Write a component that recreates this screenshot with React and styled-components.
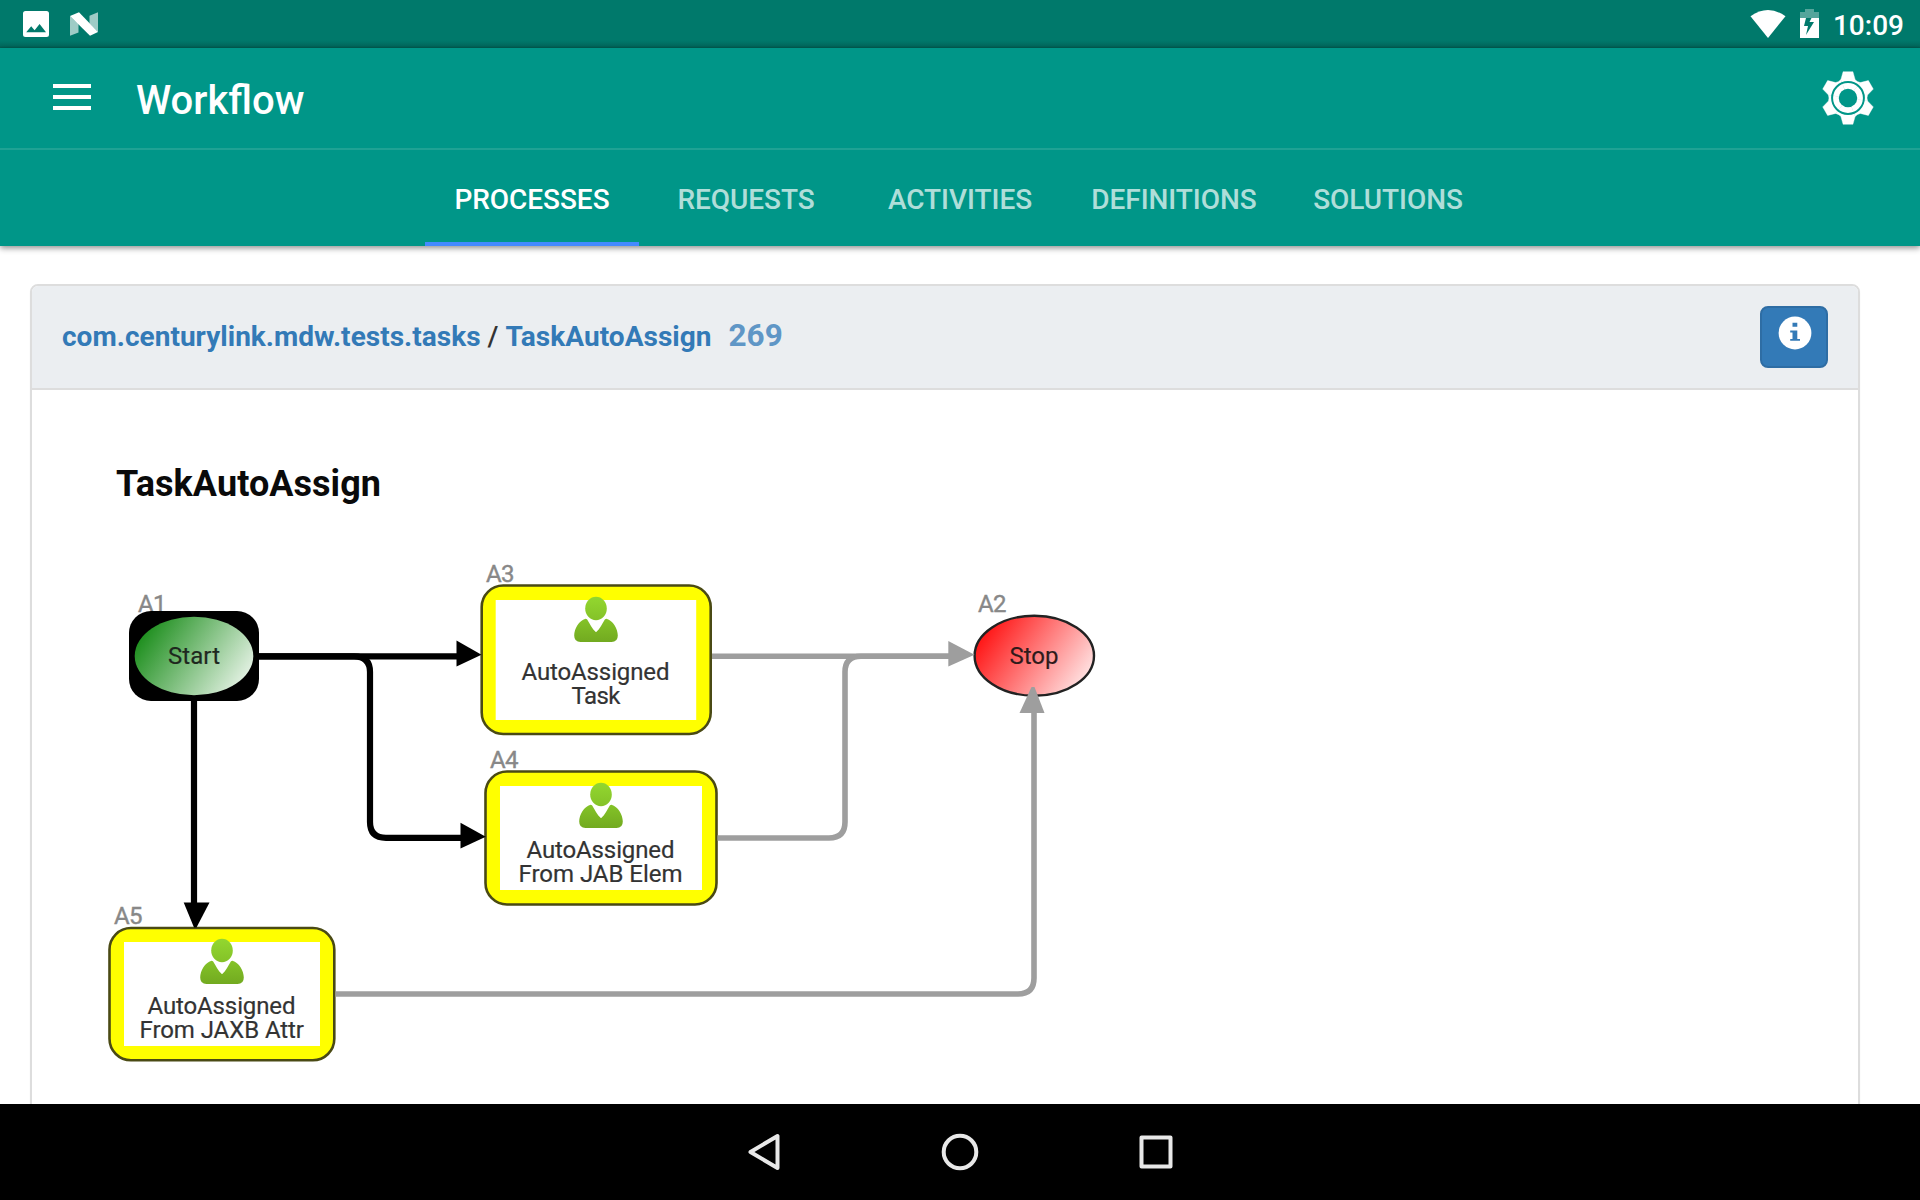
import React from "react";
import styled, { createGlobalStyle } from "styled-components";

const GlobalStyle = createGlobalStyle`
  *, *::before, *::after { box-sizing: border-box; }
  html, body { margin: 0; padding: 0; background: #fff; }
  body { font-family: Roboto, "Noto Sans", sans-serif; overflow: hidden; }
  svg { display: block; }
`;

const Screen = styled.div`
  display: flex;
  flex-direction: column;
  width: 1920px;
  height: 1200px;
  background: #fff;
`;

const StatusBar = styled.div`
  display: flex;
  justify-content: space-between;
  flex: none;
  height: 48px;
  padding: 0 16px 0 20px;
  background: linear-gradient(to bottom, #00796b 0, #00796b 40px, #006a5e 46px, #005b50 48px);
`;

const StatusGroup = styled.div`
  display: flex;
  align-items: flex-start;
`;

const Clock = styled.span`
  margin-left: 12px;
  padding-top: 10px;
  font-size: 28px;
  line-height: 32px;
  font-weight: 500;
  color: #fff;
`;

const Header = styled.header`
  flex: none;
  position: relative;
  z-index: 1;
  height: 198px;
  background: #009688;
  box-shadow: 0 2px 6px rgba(0, 0, 0, 0.45);
`;

const Toolbar = styled.div`
  display: flex;
  align-items: center;
  height: 102px;
  padding: 0 44px 0 53px;
  border-bottom: 2px solid #1fa294;
`;

const MenuButton = styled.button`
  display: flex;
  flex-direction: column;
  gap: 7px;
  width: 38px;
  margin: 0 45px 2px 0;
  padding: 0;
  border: 0;
  background: none;
`;

const MenuBar = styled.span`
  height: 4px;
  background: #fff;
`;

const Title = styled.h1`
  flex: 1;
  margin: 6px 0 0;
  font-size: 40px;
  line-height: 48px;
  font-weight: 500;
  color: #fff;
`;

const Tabs = styled.nav`
  display: flex;
  justify-content: center;
  height: 96px;
`;

const Tab = styled.a`
  width: 214px;
  height: 96px;
  padding-top: 34px;
  border-bottom: 4px solid ${(p) => (p.$active ? "#448aff" : "transparent")};
  text-align: center;
  font-size: 28px;
  line-height: 32px;
  font-weight: 500;
  letter-spacing: -0.05px;
  color: ${(p) => (p.$active ? "#fff" : "rgba(255,255,255,0.7)")};
`;

const Content = styled.main`
  flex: 1;
  min-height: 0;
  padding: 38px 60px 0 30px;
  overflow: hidden;
`;

const Panel = styled.section`
  height: 860px;
  border: 2px solid #ddd;
  border-radius: 8px;
  background: #fff;
  box-shadow: 0 2px 2px rgba(0, 0, 0, 0.05);
`;

const PanelHeading = styled.div`
  display: flex;
  align-items: center;
  justify-content: space-between;
  height: 104px;
  padding: 0 30px 2px;
  border-bottom: 2px solid #ddd;
  border-radius: 6px 6px 0 0;
  background: #ebeef1;
`;

const Breadcrumb = styled.div`
  display: flex;
  align-items: baseline;
  font-size: 28px;
  line-height: 32px;
  font-weight: 700;
  letter-spacing: 0.03px;
  color: #333;
  white-space: pre;
`;

const Crumb = styled.a`
  color: #337ab7;
`;

const Slash = styled.span`
  font-weight: 500;
`;

const InstanceId = styled.a`
  margin-left: 17px;
  font-size: 31.5px;
  color: #5f96c6;
`;

const InfoButton = styled.button`
  display: flex;
  justify-content: center;
  width: 68px;
  height: 62px;
  margin-top: 2px;
  padding: 8px 0 0 1px;
  border: 2px solid #2e6da4;
  border-radius: 8px;
  background: #337ab7;
`;

const Diagram = styled.svg`
  text {
    font-family: Roboto, "Noto Sans", sans-serif;
    font-size: 24px;
    fill: #333;
    stroke: #333;
    stroke-width: 0.2px;
  }

  text.activity-id {
    fill: #888;
    stroke: #888;
    stroke-width: 0.4px;
  }
`;

const NavBar = styled.footer`
  flex: none;
  display: flex;
  justify-content: center;
  align-items: center;
  gap: 156px;
  height: 96px;
  background: #000;
`;

const NavIcon = styled.svg`
  width: 40px;
  height: 40px;
  fill: none;
  stroke: #e8e8e8;
  stroke-width: 4;
  stroke-linejoin: round;
`;

const TABS = ["PROCESSES", "REQUESTS", "ACTIVITIES", "DEFINITIONS", "SOLUTIONS"];

const TASKS = [
  {
    id: "A3", label: [486, 581.5], box: [481.7, 585.5, 229, 148.5], inner: [495.7, 600, 200.5, 120],
    icon: [596, 597], lines: [["AutoAssigned", 521.5, 148, 679.5], ["Task", 571.5, 49, 703.7]],
  },
  {
    id: "A4", label: [490, 768], box: [485.5, 771.5, 231, 133], inner: [500, 786, 202, 104],
    icon: [601, 783], lines: [["AutoAssigned", 526.5, 148, 857.5], ["From JAB Elem", 518.5, 164, 881.5]],
  },
  {
    id: "A5", label: [114, 923.5], box: [109.5, 928, 224.8, 132.3], inner: [124, 942, 196, 104],
    icon: [222, 939], lines: [["AutoAssigned", 147.5, 148, 1013.5], ["From JAXB Attr", 139.5, 164.5, 1037.5]],
  },
];

function ActivityId({ x, y, children }) {
  return <text className="activity-id" x={x} y={y} textLength="28.5">{children}</text>;
}

function TaskNode({ task }) {
  const [bx, by, bw, bh] = task.box;
  const [ix, iy, iw, ih] = task.inner;
  return (
    <g>
      <ActivityId x={task.label[0]} y={task.label[1]}>{task.id}</ActivityId>
      <rect x={bx} y={by} width={bw} height={bh} rx="21.5" fill="#ff0" stroke="#4a4a14" strokeWidth="2.6" />
      <rect x={ix} y={iy} width={iw} height={ih} fill="#fff" />
      <g transform={`translate(${task.icon[0]} ${task.icon[1]})`}>
        <ellipse cx="0" cy="11.5" rx="10.8" ry="11.7" fill="url(#head)" />
        <path d="M-10.5 21.8L-9 22.2C-6 27 -4 32 0 35.3C4 32 6 27 9 22.2L10.5 21.8C17 23.5 21.8 32 21.8 38.5Q21.8 45 15.5 45H-15.5Q-21.8 45 -21.8 38.5C-21.8 32 -17 23.5 -10.5 21.8Z" fill="url(#torso)" />
      </g>
      {task.lines.map(([t, x, w, y]) => (
        <text key={t} x={x} y={y} textLength={w}>{t}</text>
      ))}
    </g>
  );
}

function Workflow() {
  return (
    <Diagram width="1826" height="714" viewBox="32 390 1826 714">
      <defs>
        <linearGradient id="start" gradientUnits="userSpaceOnUse" x1="134" y1="616" x2="254" y2="696">
          <stop offset="0" stopColor="#008000" />
          <stop offset="1" stopColor="#fff" />
        </linearGradient>
        <linearGradient id="stop" gradientUnits="userSpaceOnUse" x1="974" y1="615" x2="1094" y2="696">
          <stop offset="0.12" stopColor="#ff1414" />
          <stop offset="1" stopColor="#fff" />
        </linearGradient>
        <linearGradient id="head" x1="0" y1="0" x2="0" y2="1">
          <stop offset="0" stopColor="#93d72f" />
          <stop offset="1" stopColor="#84c228" />
        </linearGradient>
        <linearGradient id="torso" x1="0" y1="0" x2="0" y2="1">
          <stop offset="0" stopColor="#84c328" />
          <stop offset="1" stopColor="#72aa20" />
        </linearGradient>
      </defs>

      <text x="116" y="496" textLength="265" style={{ fontSize: 36, fontWeight: 700, fill: "#0a0a0a", stroke: "none" }}>TaskAutoAssign</text>

      <ActivityId x={138} y={612}>A1</ActivityId>
      <rect x="129" y="611" width="130" height="90" rx="22" />
      <ellipse cx="194" cy="656" rx="59.3" ry="39.3" fill="url(#start)" />
      <text x="168" y="664" textLength="52" style={{ fill: "#1c281c" }}>Start</text>

      <ActivityId x={978} y={611.5}>A2</ActivityId>
      <ellipse cx="1034.3" cy="655.7" rx="59.7" ry="40" fill="url(#stop)" stroke="#222" strokeWidth="2.4" />
      <text x="1009.5" y="664" textLength="49" style={{ fill: "#301818" }}>Stop</text>

      {TASKS.map((t) => <TaskNode key={t.id} task={t} />)}

      <g fill="none" stroke="#000" strokeWidth="6.2">
        <path d="M258 656.3H460" />
        <path d="M258 656.3H354Q370 656.3 370 672V822Q370 837.8 386 837.8H464" />
        <path d="M194 700V906" />
      </g>
      <path d="M456.5 640.5L481.5 654.8L456.5 666.5Z" />
      <path d="M460.5 822.8L485.8 836.8L460.5 848.5Z" />
      <path d="M183.7 902.5H209.5L196.5 927.5H194Z" />

      <g fill="none" stroke="#9e9e9e" strokeWidth="5.6">
        <path d="M712 656.2H952" />
        <path d="M717.5 838H829Q845 838 845 822V672Q845 656.2 861 656.2H952" />
        <path d="M335.5 994H1018Q1034 994 1034 978V710" />
      </g>
      <path d="M948.3 641L974.5 654.8L948.3 666.5Z" fill="#9e9e9e" />
      <path d="M1019.5 713H1044.5L1034.5 687H1031.5Z" fill="#9e9e9e" />
    </Diagram>
  );
}

const GEAR_SECTOR = "M0 0L-7.3 -18.7L-5 -26.8H5L7.3 -18.7Q9.2 -16.5 12.5 -15.7Z";

function Gear() {
  return (
    <svg width="56" height="56" viewBox="-28.5 -28.5 57 57">
      {[0, 60, 120, 180, 240, 300].map((a) => (
        <path key={a} d={GEAR_SECTOR} transform={`rotate(${a})`} fill="#fff" stroke="#fff" strokeWidth="0.4" />
      ))}
      <circle r="16.2" fill="none" stroke="#009688" strokeWidth="2" />
      <circle r="9.4" fill="#009688" />
    </svg>
  );
}

export default function App() {
  return (
    <>
      <GlobalStyle />
      <Screen>
        <StatusBar>
          <StatusGroup>
            <svg width="82" height="48" viewBox="20 0 82 48">
              <path fillRule="evenodd" fill="#fff" d="M25.5 11H46.5Q49 11 49 13.5V34.5Q49 37 46.5 37H25.5Q23 37 23 34.5V13.5Q23 11 25.5 11ZM26.2 32.3H46L39.6 24L34.6 30.2L31.2 26.2Z" />
              <path fill="#fff" opacity="0.62" d="M70 16L78.5 24V32.5L70 35.8ZM98 12.3V32L89.5 23.5V15.8Z" />
              <path fill="#fff" d="M70 16L79 12.2L98 32L90 35.8Z" />
            </svg>
          </StatusGroup>
          <StatusGroup>
            <svg width="72" height="48" viewBox="1749 0 72 48">
              <path fill="#fff" d="M1750.5 16.3Q1768 3.5 1785.5 16.3L1768 38Z" />
              <path fill="#fff" opacity="0.33" d="M1800 12H1805V9H1814V12H1819V18H1800Z" />
              <path fillRule="evenodd" fill="#fff" d="M1800 18H1806L1804 26H1808L1806 35L1814 22H1809.5L1811.5 18H1819V38H1800Z" />
            </svg>
            <Clock>10:09</Clock>
          </StatusGroup>
        </StatusBar>

        <Header>
          <Toolbar>
            <MenuButton aria-label="Menu">
              <MenuBar /><MenuBar /><MenuBar />
            </MenuButton>
            <Title>Workflow</Title>
            <Gear />
          </Toolbar>
          <Tabs>
            {TABS.map((t, i) => <Tab key={t} $active={i === 0}>{t}</Tab>)}
          </Tabs>
        </Header>

        <Content>
          <Panel>
            <PanelHeading>
              <Breadcrumb>
                <Crumb>com.centurylink.mdw.tests.tasks</Crumb>
                <Slash> / </Slash>
                <Crumb>TaskAutoAssign</Crumb>
                <InstanceId>269</InstanceId>
              </Breadcrumb>
              <InfoButton aria-label="Info">
                <svg width="34" height="34" viewBox="-17 -17 34 34">
                  <circle r="16.4" fill="#fff" />
                  <path fill="#337ab7" d="M-2.5 -10.3H2.3V-6.2H-2.5ZM-4.8 -2.4H2.3V6H5V7.8H-4.8V6H-2.5V-0.6H-4.8Z" />
                </svg>
              </InfoButton>
            </PanelHeading>
            <Workflow />
          </Panel>
        </Content>

        <NavBar>
          <NavIcon viewBox="0 0 40 40"><path d="M6.5 20L33.5 4V36Z" /></NavIcon>
          <NavIcon viewBox="0 0 40 40"><circle cx="20" cy="20" r="16.3" /></NavIcon>
          <NavIcon viewBox="0 0 40 40"><rect x="5.5" y="5.5" width="29" height="29" /></NavIcon>
        </NavBar>
      </Screen>
    </>
  );
}
